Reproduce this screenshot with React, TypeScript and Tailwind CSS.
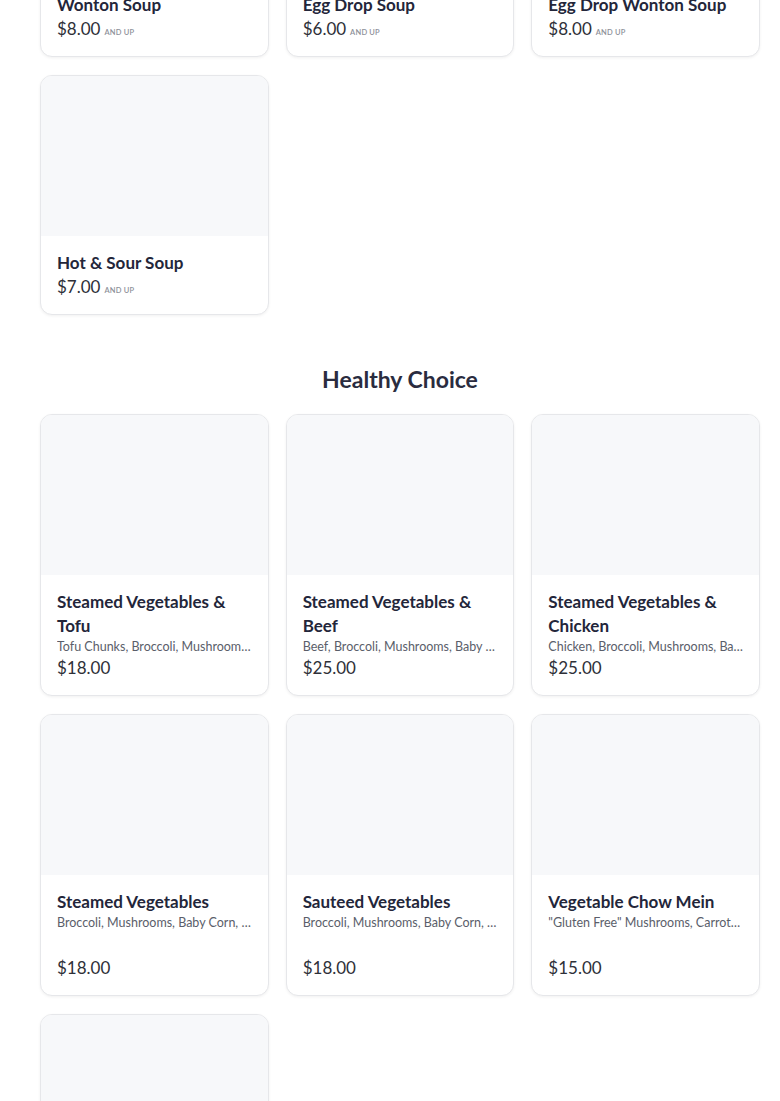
import React from 'react';

interface MenuItem {
  name: string;
  price: string;
  desc?: string;
  andUp?: boolean;
}

const soups: MenuItem[] = [
  { name: 'Wonton Soup', price: '$8.00', andUp: true },
  { name: 'Egg Drop Soup', price: '$6.00', andUp: true },
  { name: 'Egg Drop Wonton Soup', price: '$8.00', andUp: true },
  { name: 'Hot & Sour Soup', price: '$7.00', andUp: true },
];

const healthy: MenuItem[] = [
  { name: 'Steamed Vegetables & Tofu', desc: 'Tofu Chunks, Broccoli, Mushrooms, Baby Corn, Carrots, Snow Peas', price: '$18.00' },
  { name: 'Steamed Vegetables & Beef', desc: 'Beef, Broccoli, Mushrooms, Baby Corn, Carrots, Snow Peas', price: '$25.00' },
  { name: 'Steamed Vegetables & Chicken', desc: 'Chicken, Broccoli, Mushrooms, Baby Corn, Carrots', price: '$25.00' },
  { name: 'Steamed Vegetables', desc: 'Broccoli, Mushrooms, Baby Corn, Carrots, Snow Peas', price: '$18.00' },
  { name: 'Sauteed Vegetables', desc: 'Broccoli, Mushrooms, Baby Corn, Carrots, Snow Peas', price: '$18.00' },
  { name: 'Vegetable Chow Mein', desc: '"Gluten Free" Mushrooms, Carrots, Cabbage, Bean Sprouts', price: '$15.00' },
  { name: 'Steamed Mixed Vegetables', desc: 'Broccoli, Carrots, Snow Peas', price: '$16.00' },
];

function ItemCard({ item }: { item: MenuItem }) {
  return (
    <div className="flex flex-col bg-white border border-[#e6e7ea] rounded-xl overflow-hidden shadow-[0_1px_3px_rgba(0,0,0,0.06)]">
      <div className="h-[160px] bg-[#f7f8fa]" />
      <div className="flex flex-col flex-1 px-4 py-[15px]">
        <h3 className="text-[17px] leading-6 font-bold text-[#23263a]">{item.name}</h3>
        {item.desc && (
          <p className="text-[12.5px] leading-[18px] text-[#5a5e6a] truncate">{item.desc}</p>
        )}
        <div className="mt-auto flex items-baseline text-[#2e3038]">
          <span className="text-[17px] leading-6">{item.price}</span>
          {item.andUp && (
            <span className="ml-1 text-[7.5px] font-semibold uppercase tracking-wide text-[#8d9099]">and up</span>
          )}
        </div>
      </div>
    </div>
  );
}

export default function App() {
  return (
    <div className="bg-white min-h-screen overflow-hidden" style={{ fontFamily: 'Lato, "Open Sans", sans-serif' }}>
      <div className="w-[720px] ml-10 mt-[-183px] pb-10">
        <div className="grid grid-cols-3 gap-x-[17px] gap-y-[18px]">
          {soups.map((s) => (
            <ItemCard key={s.name} item={s} />
          ))}
        </div>

        <h2 className="mt-[50px] mb-[21px] text-center text-[23px] leading-7 font-bold text-[#2a2c3f]">Healthy Choice</h2>

        <div className="grid grid-cols-3 auto-rows-fr gap-x-[17px] gap-y-[18px]">
          {healthy.map((s) => (
            <ItemCard key={s.name} item={s} />
          ))}
        </div>
      </div>
    </div>
  );
}
